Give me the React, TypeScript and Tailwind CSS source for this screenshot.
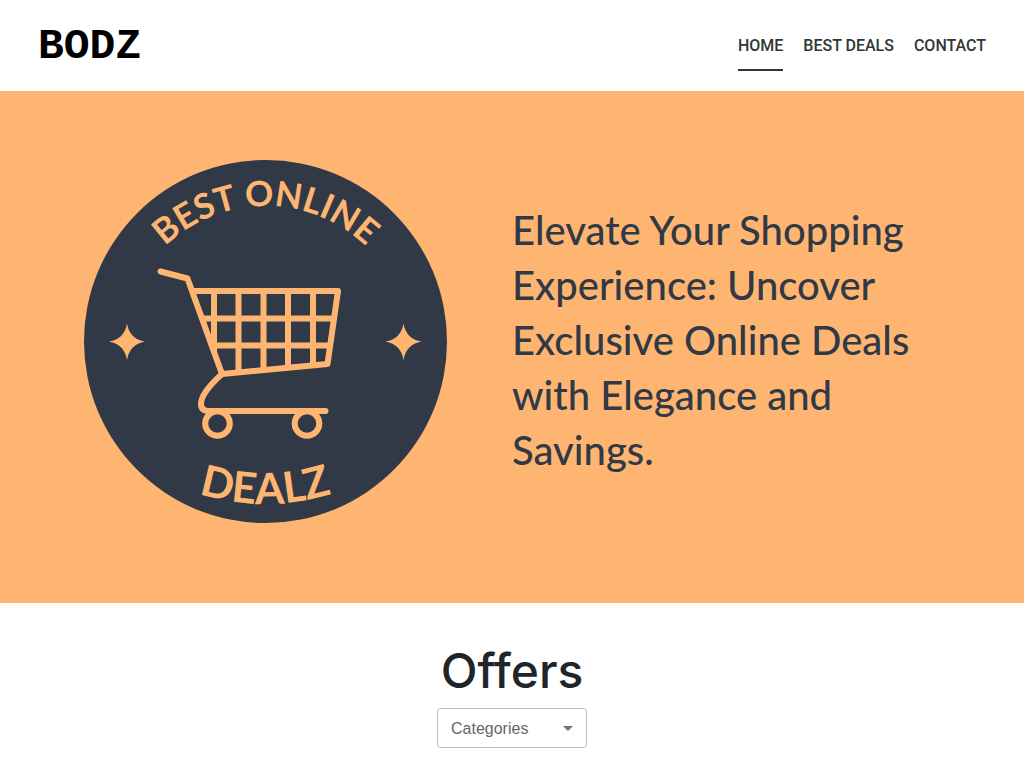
import React, { useState } from "react";

const links = [
  { label: "HOME", href: "#home" },
  { label: "BEST DEALS", href: "#best-deals" },
  { label: "CONTACT", href: "#contact" },
];

const headline = [
  "Elevate Your Shopping",
  "Experience: Uncover",
  "Exclusive Online Deals",
  "with Elegance and",
  "Savings.",
];

function Header() {
  const [active, setActive] = useState("HOME");
  return (
    <header className="flex h-[91px] items-center justify-between bg-white pr-[38px] pl-[38px]">
      <a
        href="#home"
        className="pt-[3px] font-['Liberation_Mono',monospace] text-[43px] leading-[48px] font-bold text-black"
      >
        BODZ
      </a>
      <nav className="flex gap-5 font-[Roboto,sans-serif] text-base font-medium text-[#2f3735]">
        {links.map((link) => (
          <a
            key={link.label}
            href={link.href}
            onClick={() => setActive(link.label)}
            className={
              active === link.label
                ? "border-y-2 border-t-transparent border-b-[#2f3735] py-[11px]"
                : "border-y-2 border-transparent py-[11px]"
            }
          >
            {link.label}
          </a>
        ))}
      </nav>
    </header>
  );
}

function Badge() {
  return (
    <svg viewBox="0 0 363 363" className="w-full max-w-[363px]" role="img" aria-label="Best Online Dealz">
      <defs>
        <path id="arc-top" d="M36.500 191a145 145 0 0 1 290 0" />
        <path id="arc-bottom" d="M-38.500 124a220 220 0 0 0 440 0" />
      </defs>
      <circle cx="181.5" cy="181.5" r="181.5" fill="#323946" />
      <g fill="#ffb572" fontFamily="Lato, sans-serif" fontWeight="700" textAnchor="middle">
        <text fontSize="35">
          <textPath href="#arc-top" startOffset="50%">BEST ONLINE</textPath>
        </text>
        <text fontSize="43">
          <textPath href="#arc-bottom" startOffset="50%">DEALZ</textPath>
        </text>
      </g>
      <g fill="#ffb572">
        <path d="M43 163.500Q45.500 179 61 181.500Q45.500 184.500 43 200Q40.500 184.500 25 181.500Q40.500 179 43 163.500Z" />
        <path d="M319.500 163.500Q322 179 337.500 181.500Q322 184.500 319.500 200Q317 184.500 301.500 181.500Q317 179 319.500 163.500Z" />
      </g>
      <g fill="none" stroke="#ffb572" strokeWidth="6" strokeLinecap="round" strokeLinejoin="round">
        <path d="M76.500 111.500L103.500 118.500L138 214L243.500 204L254 131H108.500" />
        <path d="M138 214C128 223 117 234 117 244Q117 251 125 251H241.500" />
        <path d="M118.500 158.500H250M128 185.500H246" />
        <path d="M130 131V193M154.500 131V211M179.500 131V209M204 131V207M229 131V205" strokeLinecap="butt" />
        <circle cx="133.500" cy="263.500" r="12.300" />
        <circle cx="223" cy="263.500" r="12.300" />
      </g>
    </svg>
  );
}

function Hero() {
  return (
    <section className="grid grid-cols-2 items-center bg-[#ffb572] pt-[69px] pb-20">
      <div className="pr-16 pl-[84px]">
        <Badge />
      </div>
      <h1 className="pb-0.5 font-[Lato,sans-serif] text-[40px] leading-[55px] font-medium text-[#323946]">
        {headline.map((line) => (
          <span key={line} className="block whitespace-nowrap">
            {line}
          </span>
        ))}
      </h1>
    </section>
  );
}

function Offers() {
  return (
    <section className="flex flex-col items-center bg-white pt-10 pb-5">
      <h2 className="font-[Inter,sans-serif] text-5xl leading-[56px] font-medium text-[#212529]">
        Offers
      </h2>
      <div className="relative mt-[9px] w-[150px]">
        <select
          aria-label="Categories"
          defaultValue=""
          className="h-10 w-full appearance-none rounded border border-[#bdbdbd] bg-white pt-0.5 pr-8 pl-[13px] font-['Liberation_Sans',sans-serif] text-base text-[#666666]"
        >
          <option value="">Categories</option>
        </select>
        <svg
          viewBox="0 0 24 24"
          className="pointer-events-none absolute top-2 right-[7px] size-6 fill-[#757575]"
          aria-hidden="true"
        >
          <path d="M7 10l5 5 5-5z" />
        </svg>
      </div>
    </section>
  );
}

export default function App() {
  return (
    <main className="min-h-screen bg-white">
      <Header />
      <Hero />
      <Offers />
    </main>
  );
}
